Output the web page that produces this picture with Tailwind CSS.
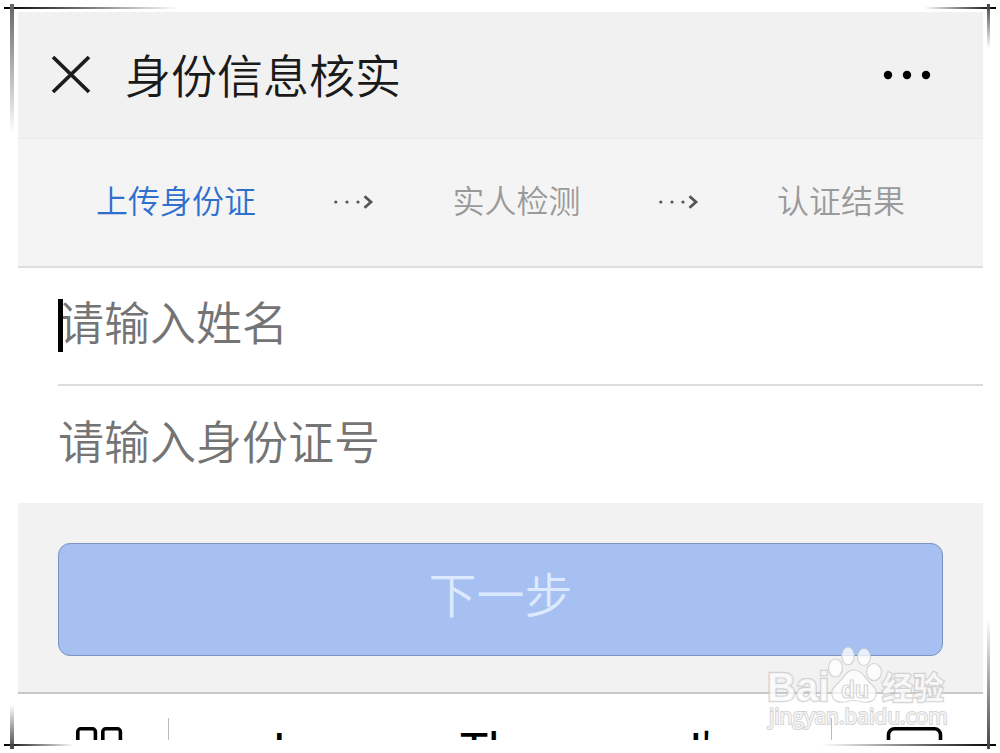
<!DOCTYPE html>
<html lang="zh-CN">
<head>
<meta charset="utf-8">
<meta name="viewport" content="width=device-width, initial-scale=1">
<title>身份信息核实</title>
<script src="https://cdn.jsdelivr.net/npm/@tailwindcss/browser@4"></script>
</head>
<body class="bg-white font-['Noto_Sans_CJK_SC',sans-serif]">
<div class="relative pt-3 pr-[17px] pb-[13px] pl-[18px]">
  <main class="flex flex-col bg-[#f3f3f3]">
    <header class="flex items-center border-b border-[#ebebeb] bg-[#f1f1f1] py-[31px] pr-[52px] pl-[33px]">
      <button type="button" aria-label="关闭" class="shrink-0">
        <svg class="block size-10" viewBox="0 0 40 40" fill="none" stroke="#1c1c1c" stroke-width="3.8"><path d="M2 2 38 37M38 2 2 37"/></svg>
      </button>
      <h1 class="ml-[34px] pb-1 text-[46px] leading-15 font-[350] text-[#1a1a1a]">身份信息核实</h1>
      <button type="button" aria-label="更多" class="ml-auto shrink-0">
        <svg class="block h-4 w-12" viewBox="0 0 48 16" fill="#000"><circle cx="5" cy="8" r="4.2"/><circle cx="24" cy="8" r="4.2"/><circle cx="43" cy="8" r="4.2"/></svg>
      </button>
    </header>

    <ol class="flex items-center justify-between border-b-2 border-[#dedede] bg-[#f4f4f4] px-[78px] pt-[38px] pb-[41px] text-[32px] leading-12 font-[350] text-[#9a9a9a]">
      <li class="pb-1 leading-11 text-[#2f6fcd]" aria-current="step">上传身份证</li>
      <li aria-hidden="true"><svg class="block h-4 w-10" viewBox="0 0 40 16"><g fill="#555"><circle cx="1.8" cy="9" r="1.6"/><circle cx="13" cy="9" r="1.6"/><circle cx="24" cy="9" r="1.6"/></g><path d="M30.500 3.200 37 9 30.500 14.800" fill="none" stroke="#555" stroke-width="2.8"/></svg></li>
      <li class="pb-1 leading-11">实人检测</li>
      <li aria-hidden="true"><svg class="block h-4 w-10" viewBox="0 0 40 16"><g fill="#555"><circle cx="1.8" cy="9" r="1.6"/><circle cx="13" cy="9" r="1.6"/><circle cx="24" cy="9" r="1.6"/></g><path d="M30.500 3.200 37 9 30.500 14.800" fill="none" stroke="#555" stroke-width="2.8"/></svg></li>
      <li class="pb-1 leading-11">认证结果</li>
    </ol>

    <form>
      <div class="bg-white pl-10">
        <div class="relative border-b-2 border-[#dcdcdc]">
          <input type="text" aria-label="姓名" placeholder="请输入姓名" class="block h-[116px] w-full bg-transparent pb-3 text-[46px] font-[350] text-[#222] outline-none placeholder:text-[#747474]">
          <span class="absolute top-[31px] left-0 h-[53px] w-[5px] bg-black"></span>
        </div>
        <input type="text" aria-label="身份证号" placeholder="请输入身份证号" class="block h-[117px] w-full bg-transparent pb-3 text-[46px] font-[350] text-[#222] outline-none placeholder:text-[#747474]">
      </div>
      <div class="border-b-2 border-[#c8c8c8] bg-[#f2f2f2] px-10 pt-10 pb-9">
        <button type="button" class="block h-[113px] w-full rounded-xl border border-[#7d93bf] bg-[#a5c0f1] pb-4 text-[48px] font-[350] text-[#dde9ff]">下一步</button>
      </div>
    </form>

    <div class="flex h-[46px] items-start overflow-hidden bg-white font-[Roboto,sans-serif] text-[48px] leading-14 text-black">
      <button type="button" aria-label="键盘菜单" class="flex w-[150px] shrink-0 justify-start pt-[33px] pl-[57px]">
        <svg class="block h-12 w-[50px]" viewBox="0 0 50 48" fill="none" stroke="#000" stroke-width="3.6"><rect x="2.8" y="1.8" width="17.6" height="18" rx="3"/><rect x="27.8" y="1.8" width="17.6" height="18" rx="3"/></svg>
      </button>
      <span class="mt-6 h-6 w-px shrink-0 bg-[#bbb]"></span>
      <div class="grid flex-1 grid-cols-3 pt-[29px] text-center">
        <button type="button">I</button>
        <button type="button">The</button>
        <button type="button">I'm</button>
      </div>
      <span class="mt-6 h-6 w-px shrink-0 bg-[#bbb]"></span>
      <button type="button" aria-label="收起键盘" class="flex w-[151px] shrink-0 justify-start pt-[33px] pl-[54px]">
        <svg class="block h-12 w-[58px]" viewBox="0 0 58 48" fill="none" stroke="#000" stroke-width="3.6"><rect x="2.5" y="1.8" width="52" height="40" rx="6"/></svg>
      </button>
    </div>
  </main>

  <!-- Pen-stroke picture frame -->
  <div class="pointer-events-none absolute inset-0" aria-hidden="true">
    <span class="absolute top-[7px] left-1 h-[2px] w-[175px] bg-linear-to-r from-black to-transparent"></span>
    <span class="absolute top-1 left-[10px] h-[130px] w-[4px] bg-linear-to-b from-[#666] to-transparent"></span>
    <span class="absolute top-[7px] right-1 h-[2px] w-[72px] bg-linear-to-l from-black to-transparent"></span>
    <span class="absolute top-1 right-[10px] h-[44px] w-[3px] bg-linear-to-b from-[#444] to-transparent"></span>
    <span class="absolute bottom-[7px] left-1 h-[2px] w-[70px] bg-linear-to-r from-black to-transparent"></span>
    <span class="absolute bottom-1 left-[10px] h-[44px] w-[4px] bg-linear-to-t from-[#444] to-transparent"></span>
    <span class="absolute right-1 bottom-[7px] h-[2px] w-[175px] bg-linear-to-l from-black to-transparent"></span>
    <span class="absolute right-[10px] bottom-1 h-[130px] w-[3px] bg-linear-to-t from-[#444] to-transparent"></span>
  </div>

  <!-- Watermark -->
  <svg class="pointer-events-none absolute right-[50px] bottom-[18px] h-[90px] w-[190px]" viewBox="0 0 190 90" fill="#fff" fill-opacity=".75" stroke="#c4c4c4" stroke-opacity=".7" stroke-width="1.2">
    <text x="7" y="56" font-family="Liberation Sans" font-weight="bold" font-size="40" paint-order="stroke" stroke-width="2.4">Bai</text>
    <ellipse cx="75.500" cy="23" rx="7" ry="9"/>
    <ellipse cx="88" cy="11" rx="6.300" ry="9"/>
    <ellipse cx="104" cy="12" rx="6.500" ry="8.500"/>
    <ellipse cx="114" cy="27" rx="7.500" ry="8.500"/>
    <path d="M94 25c8 0 11 8 16 13 5 4 7 7 6 12-1 6-7 8-13 7-6-2-12-2-18 0-6 1-12-1-13-7-1-5 2-8 6-12 6-5 8-13 16-13Z"/>
    <text x="81" y="53" font-family="Liberation Sans" font-weight="bold" font-size="23">du</text>
    <text x="122" y="54" font-family="Noto Sans CJK SC" font-weight="bold" font-size="31" paint-order="stroke" stroke-width="2.4">经验</text>
    <text x="9" y="79" font-family="Open Sans" font-size="21" paint-order="stroke" stroke-width="2">jingyan.baidu.com</text>
  </svg>
</div>
</body>
</html>
